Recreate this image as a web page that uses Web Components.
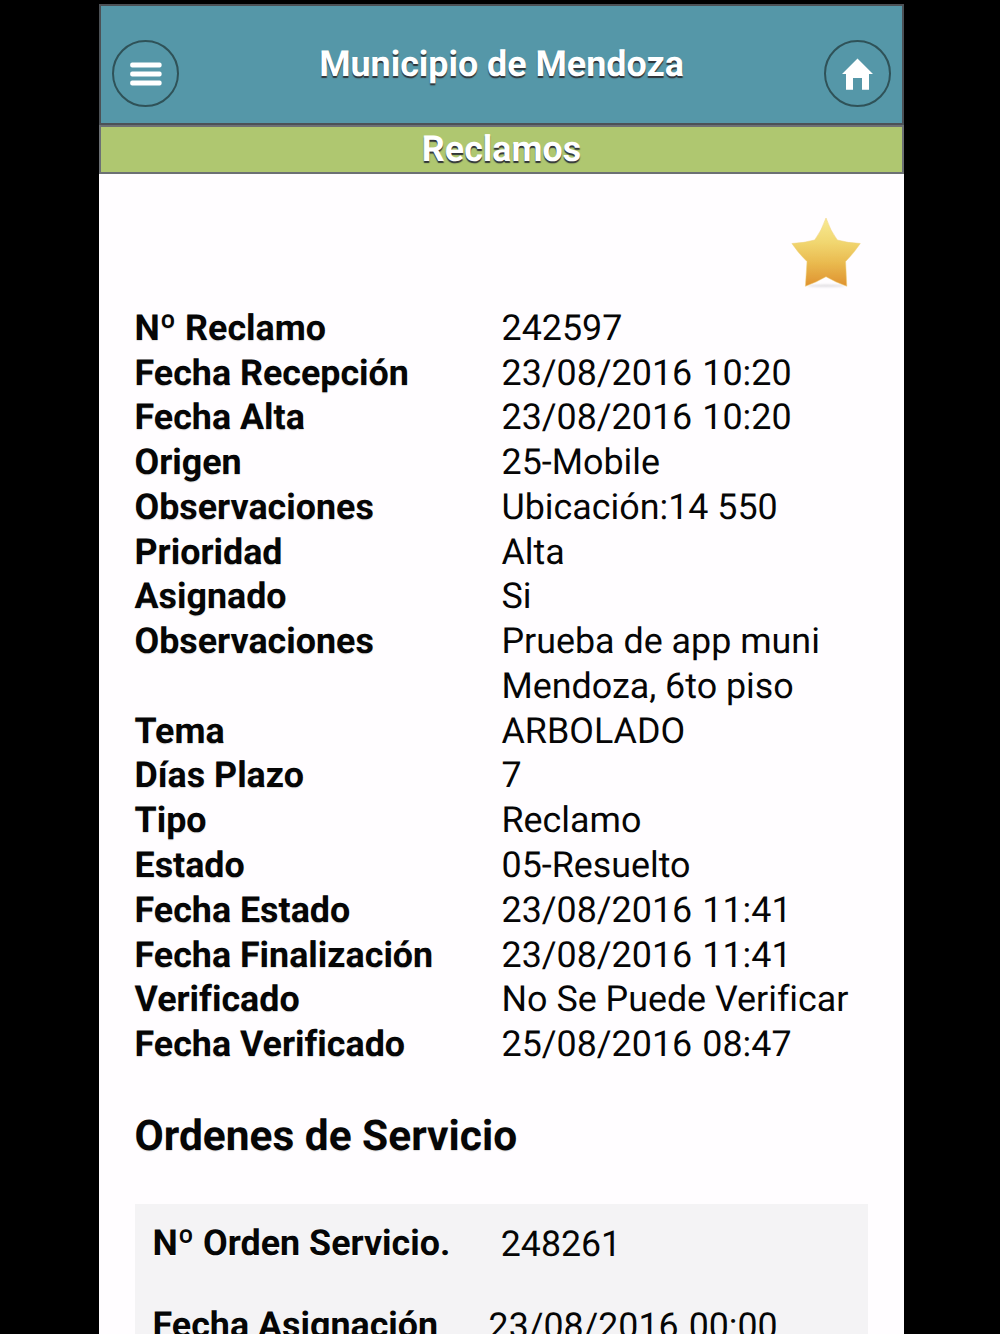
<!DOCTYPE html>
<html lang="es">
<head>
<meta charset="utf-8">
<title>Municipio de Mendoza</title>
<style>
html,body{margin:0;height:100%;background:#000;overflow:hidden}
body{font-family:Roboto,"Liberation Sans",sans-serif;font-size:35.84px;color:#060606;font-variant-ligatures:none;text-rendering:geometricPrecision}
</style>
</head>
<body>
<claim-app></claim-app>
<script>
const define = (name, html) => {
  const t = document.createElement('template');
  t.innerHTML = html;
  customElements.define(name, class extends HTMLElement {
    constructor() {
      super();
      this.attachShadow({mode: 'open'}).append(t.content.cloneNode(true));
    }
  });
};

define('round-button', `<style>
:host{display:flex;box-sizing:border-box;width:67px;height:67px;border:2px solid #2f5258;border-radius:50%;align-items:center;justify-content:center}
</style><slot></slot>`);

define('menu-icon', `<style>:host,svg{display:block}</style>
<svg width="32" height="24" viewBox="0 0 32 24" fill="#fff"><rect x="0.2" y="0.4" width="31.4" height="5" rx="2"/><rect x="0.2" y="9.5" width="31.4" height="5" rx="2"/><rect x="0.2" y="18.5" width="31.4" height="5" rx="2"/></svg>`);

define('home-icon', `<style>:host,svg{display:block}</style>
<svg width="31" height="32" viewBox="0 0 31 32" fill="#fff"><path d="M15.5 0.4 31 16H27V31.8H20V20H11V31.8H4V16H0Z"/></svg>`);

define('star-icon', `<style>:host,svg{display:block}</style>
<svg width="70" height="74" viewBox="0 0 70 74"><defs>
<linearGradient id="g" x1="0" y1="0" x2="0" y2="1"><stop offset="0" stop-color="#f8ea94"/><stop offset=".35" stop-color="#f1d771"/><stop offset=".65" stop-color="#eabb50"/><stop offset="1" stop-color="#df922f"/></linearGradient>
<filter id="b" x="-20%" y="-100%" width="140%" height="300%"><feGaussianBlur stdDeviation=".8"/></filter>
<filter id="s"><feGaussianBlur stdDeviation=".6"/></filter></defs>
<ellipse cx="35" cy="68.8" rx="19" ry="1" fill="#b5b2b8" opacity=".5" filter="url(#b)"/>
<path d="M35 1Q39.5 14 46.3 23Q57 26 69.3 26.5Q62.5 36.5 54.6 44.5L55.8 69.3Q44 65 35 59.7Q26 65 14.4 69.3L16 44.5Q7.5 36.5 .9 26.5Q13 26 23.7 23Q30.5 14 35 1Z" fill="url(#g)" stroke="#efd078" stroke-opacity=".5" stroke-width="1" stroke-linejoin="round" filter="url(#s)"/></svg>`);

define('app-header', `<style>
:host{display:flex;box-sizing:border-box;height:121px;border:2px solid #4c5156;background:#5597a8;padding:0 11px;align-items:center;justify-content:space-between;color:#fff}
h1{margin:0;font-size:35.84px;line-height:42px;font-weight:700;padding-bottom:2px;text-shadow:0 2px 1px #303438}
round-button{margin-top:18px}
</style><round-button><menu-icon></menu-icon></round-button><h1><slot></slot></h1><round-button><home-icon></home-icon></round-button>`);

define('section-bar', `<style>
:host{display:block;box-sizing:border-box;height:49px;border:2px solid #6c7074;background:#afc770;color:#fff;text-align:center;font-weight:700;line-height:44px;text-shadow:0 2px 1px #303438}
</style><slot></slot>`);

define('data-row', `<style>
:host{display:grid;grid-template-columns:367px 1fr;line-height:44.76px}
.l{font-weight:700;text-shadow:0 1px 1px #ddd}
:host([date]) .v{word-spacing:1.3px}
</style><span class="l"><slot name="label"></slot></span><span class="v"><slot></slot></span>`);

define('order-row', `<style>
:host{display:flex;line-height:44px;white-space:nowrap}
.l{font-weight:700;text-shadow:0 1px 0 #fff}
.v{margin-left:50.5px;padding-top:1px;font-size:35.7px;word-spacing:1.3px}
</style><span class="l"><slot name="label"></slot></span><span class="v"><slot></slot></span>`);

define('order-card', `<style>
:host{display:flex;flex-direction:column;gap:37px;background:#f4f3f5;margin-top:42px;padding:17px 18px 0;height:163px}
</style><slot></slot>`);

const rows = [['Nº Reclamo','242597'],['Fecha Recepción','23/08/2016 10:20'],['Fecha Alta','23/08/2016 10:20'],['Origen','25-Mobile'],['Observaciones','Ubicación:14 550'],['Prioridad','Alta'],['Asignado','Si'],['Observaciones','Prueba de app muni<br>Mendoza, 6to piso'],['Tema','ARBOLADO'],['Días Plazo','7'],['Tipo','Reclamo'],['Estado','05-Resuelto'],['Fecha Estado','23/08/2016 11:41'],['Fecha Finalización','23/08/2016 11:41'],['Verificado','No Se Puede Verificar'],['Fecha Verificado','25/08/2016 08:47']]
  .map(([l, v]) => `<data-row${l.startsWith('Fecha') ? ' date' : ''}><span slot="label">${l}</span>${v}</data-row>`).join('');

define('claim-app', `<style>
:host{display:block;box-sizing:border-box;width:805px;height:1334px;margin-left:99px;padding-top:4px;overflow:hidden}
main{background:#fffdff;height:1200px;box-sizing:border-box;padding:43px 36px 0 35.5px}
star-icon{width:70px;margin:0 7px 14.8px auto}
h2{margin:45px 0 0;font-size:42.45px;line-height:50px;font-weight:700;text-shadow:0 1px 1px #ddd}
</style>
<app-header>Municipio de Mendoza</app-header>
<section-bar>Reclamos</section-bar>
<main><star-icon></star-icon>${rows}<h2>Ordenes de Servicio</h2>
<order-card>
<order-row><span slot="label">Nº Orden Servicio.</span>248261</order-row>
<order-row><span slot="label">Fecha Asignación</span>23/08/2016 00:00</order-row>
</order-card></main>`);
</script>
</body>
</html>
